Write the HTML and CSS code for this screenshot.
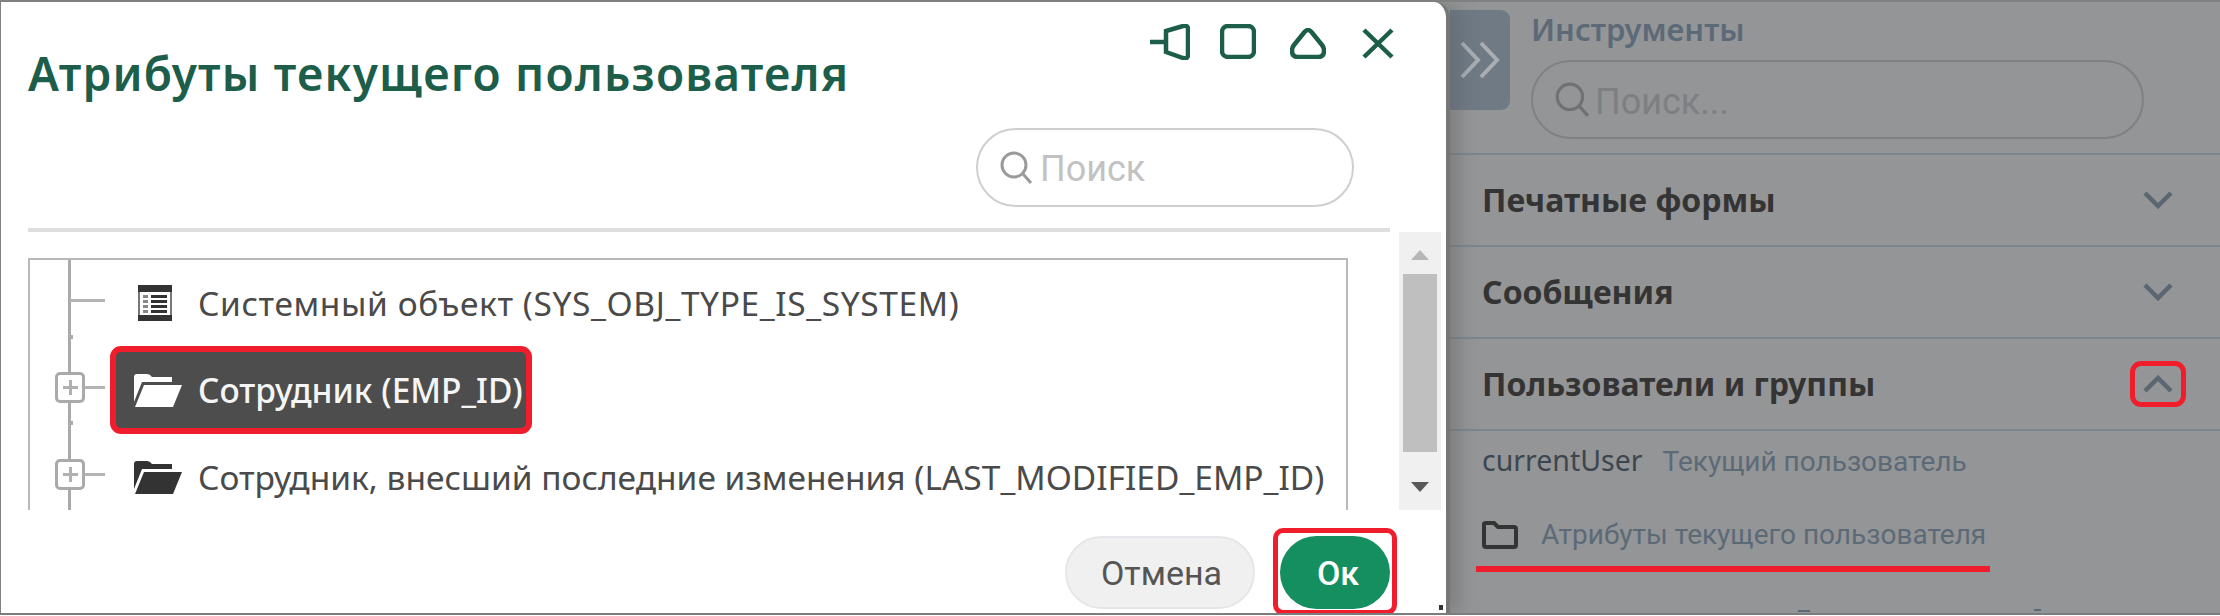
FILE: index.html
```html
<!DOCTYPE html>
<html lang="ru">
<head>
<meta charset="utf-8">
<title>Атрибуты текущего пользователя</title>
<link rel="stylesheet" href="styles.css">
</head>
<body>
<div class="stage">
  <section class="dialog">
    <header class="dialog-head">
      <h1 class="dialog-title">Атрибуты текущего пользователя</h1>
      <div class="win-icons">
        <svg class="win-a" width="40" height="36" viewBox="0 0 40 36"><path d="M0 18H16M16 7V28L33 34Q38 35 38 31V5Q38 1 33 2Z"/></svg>
        <svg class="win-b" width="36" height="35" viewBox="0 0 36 35"><rect x="2" y="2" width="32" height="31" rx="6"/></svg>
        <svg class="win-c" width="36" height="31" viewBox="0 0 36 31"><path d="M14.500 4Q18 0 21.500 4L32 17Q34 19.500 34 23Q34 29 28 29H8Q2 29 2 23Q2 19.500 4 17Z"/></svg>
        <svg class="win-d" width="32" height="31" viewBox="0 0 32 31"><path d="M2 2L30 29M30 2L2 29"/></svg>
      </div>
    </header>
    <div class="dialog-search">
      <div class="search-box">
        <svg class="loupe" width="34" height="34" viewBox="0 0 34 34"><circle cx="15" cy="14" r="12"/><path d="M24 23L32 32"/></svg>
        <span class="search-hint">Поиск</span>
      </div>
    </div>
    <div class="divider"></div>
    <div class="tree-area">
      <div class="tree">
        <div class="tree-row">
          <span class="gutter gutter-leaf"><i class="twig"></i></span>
          <span class="node">
            <span class="node-icon">
              <svg width="34" height="36" viewBox="0 0 34 36"><path class="ic-frame" d="M1 0V36M33 0V36"/><path class="ic-dark" d="M0 0H34V7H0ZM0 30H34V36H0ZM13 10H29V13H13ZM13 15H29V18H13ZM13 20H29V23H13ZM13 25H29V28H13Z"/><path class="ic-dim" d="M5 10H10V13H5ZM5 15H10V18H5ZM5 20H10V23H5ZM5 25H10V28H5Z"/></svg>
            </span>
            <span class="node-label node-label-wide">Системный объект (SYS_OBJ_TYPE_IS_SYSTEM)</span>
          </span>
        </div>
        <div class="tree-row">
          <span class="gutter"><span class="toggle"><svg width="17" height="17" viewBox="0 0 17 17"><path d="M8.500 1V16M1 8.500H16"/></svg></span><i class="twig"></i></span>
          <span class="node node-selected">
            <span class="node-icon">
              <svg class="folder-light" width="48" height="34" viewBox="0 0 48 34"><path d="M0 4Q0 1 3 1H13Q16 1 18 4H38V9H8L0 29ZM10 12H48L39 34H1Z"/></svg>
            </span>
            <span class="node-label">Сотрудник (EMP_ID)</span>
          </span>
        </div>
        <div class="tree-row">
          <span class="gutter"><span class="toggle"><svg width="17" height="17" viewBox="0 0 17 17"><path d="M8.500 1V16M1 8.500H16"/></svg></span><i class="twig"></i></span>
          <span class="node">
            <span class="node-icon">
              <svg class="folder-dark" width="48" height="34" viewBox="0 0 48 34"><path d="M0 4Q0 1 3 1H13Q16 1 18 4H38V9H8L0 29ZM10 12H48L39 34H1Z"/></svg>
            </span>
            <span class="node-label">Сотрудник, внесший последние изменения (LAST_MODIFIED_EMP_ID)</span>
          </span>
        </div>
      </div>
      <div class="scrollbar">
        <span class="arrow-up"></span>
        <span class="thumb"></span>
        <span class="arrow-down"></span>
      </div>
    </div>
    <footer class="dialog-foot">
      <button class="btn-cancel" type="button">Отмена</button>
      <span class="mark-ok"><button class="btn-ok" type="button">Ок</button></span>
    </footer>
    <span class="grip"></span>
  </section>

  <aside class="panel">
    <div class="panel-head">
      <div class="panel-tab">
        <svg width="42" height="38" viewBox="0 0 42 38"><path d="M3 2L19 19L3 36M22 2L38 19L22 36"/></svg>
      </div>
      <div class="panel-tools">
        <div class="panel-title">Инструменты</div>
        <div class="panel-search">
          <svg class="loupe-dim" width="36" height="36" viewBox="0 0 34 34"><circle cx="15" cy="14" r="12"/><path d="M24 23L32 32"/></svg>
          <span class="panel-hint">Поиск...</span>
        </div>
      </div>
    </div>
    <div class="section">
      <span class="section-title">Печатные формы</span>
      <span class="chev-box"><svg width="30" height="18" viewBox="0 0 30 18"><path d="M2 2L15 15L28 2"/></svg></span>
    </div>
    <div class="section">
      <span class="section-title">Сообщения</span>
      <span class="chev-box"><svg width="30" height="18" viewBox="0 0 30 18"><path d="M2 2L15 15L28 2"/></svg></span>
    </div>
    <div class="section">
      <span class="section-title">Пользователи и группы</span>
      <span class="chev-box chev-marked"><svg width="30" height="18" viewBox="0 0 30 18"><path d="M2 16L15 3L28 16"/></svg></span>
    </div>
    <div class="var-row">
      <span class="var-code">currentUser</span>
      <span class="var-name">Текущий пользователь</span>
    </div>
    <div class="folder-row">
      <svg width="36" height="28" viewBox="0 0 36 28"><path d="M2 24V3Q2 2 4 2H12L16 6H32Q34 6 34 8V24Q34 26 32 26H4Q2 26 2 24Z"/></svg>
      <span class="folder-name">Атрибуты текущего пользователя</span>
    </div>
    <div class="cut-row">
      <span class="cut-bar"></span>
      <span class="cut-breve"></span>
    </div>
  </aside>
</div>
</body>
</html>
```
FILE: styles.css
```css
* { box-sizing: border-box; }
html, body { margin: 0; padding: 0; background: #fff; }
body { width: 2220px; height: 616px; overflow: hidden; font-family: "Roboto", "Liberation Sans", sans-serif; }

.stage {
  display: flex;
  width: 2220px;
  height: 615px;
  background: #949596;
  border-top: 2px solid #808080;
  border-bottom: 2px solid #7c7c7c;
  overflow: hidden;
}

/* Dialog */
.dialog {
  position: relative;
  flex: 0 0 1450px;
  display: flex;
  flex-direction: column;
  background: #fff;
  border-left: 1px solid #808080;
  border-right: 4px solid #767676;
  border-top-right-radius: 16px;
  box-shadow: 10px 0 18px rgba(90, 90, 90, .35);
  z-index: 1;
}
.dialog > * { flex: none; }
.dialog-head {
  display: flex;
  justify-content: space-between;
  align-items: flex-start;
  height: 126px;
  padding-left: 27px;
}
.dialog-title {
  margin: 45px 0 0;
  font-family: "Noto Sans", "Liberation Sans", sans-serif;
  font-size: 46px;
  line-height: 52px;
  font-weight: 600;
  letter-spacing: 1.200px;
  color: #1c5e4a;
  white-space: nowrap;
}
.win-icons {
  display: flex;
  align-items: flex-start;
  margin: 22px 52px 0 0;
}
.win-icons svg { fill: none; stroke: #1c5e4a; stroke-width: 4.500; }
.win-a { margin-right: 30px; }
.win-b { margin-right: 34px; }
.win-c { margin: 4px 36px 0 0; }
.win-d { margin-top: 4px; }

.dialog-search {
  display: flex;
  justify-content: flex-end;
  height: 79px;
  padding-right: 92px;
  margin-bottom: 21px;
}
.search-box {
  display: flex;
  align-items: center;
  width: 378px;
  height: 79px;
  padding-left: 21px;
  border: 2px solid #cfcfcf;
  border-radius: 40px;
}
.loupe { fill: none; stroke: #9a9a9a; stroke-width: 3; margin-right: 7px; }
.search-hint { font-size: 36px; color: #c2c2c2; line-height: 40px; padding-top: 2px; }

.divider { height: 4px; margin-left: 27px; width: 1362px; background: #dedede; }

.tree-area { display: flex; height: 278px; }
.tree {
  position: relative;
  width: 1320px;
  margin: 26px 0 0 27px;
  padding-top: 0;
  border: 2px solid #b8b8b8;
  border-bottom: 0;
  overflow: hidden;
}
.tree::before {
  content: "";
  position: absolute;
  left: 38px;
  top: 0;
  bottom: 0;
  width: 3px;
  background: #aaa;
}
.tree::after {
  content: "";
  position: absolute;
  left: 41px;
  top: 75px;
  width: 2px;
  height: 4px;
  background: #aaa;
  box-shadow: 0 86px #aaa;
}
.tree-row { display: flex; align-items: center; height: 87px; flex: none; }
.tree-row:first-child { margin-top: -3px; }
.gutter { position: relative; display: flex; align-items: center; width: 75px; padding-left: 25px; flex: none; }
.gutter-leaf { padding-left: 40px; }
.twig { flex: 1; height: 3px; background: #b4b4b4; }
.toggle {
  position: relative;
  display: flex;
  align-items: center;
  justify-content: center;
  width: 30px;
  height: 31px;
  background: #fff;
  border: 3px solid #aaa;
  border-radius: 5px;
}
.toggle svg { fill: none; stroke: #b0b0b0; stroke-width: 3; }
.node {
  display: flex;
  align-items: center;
  height: 88px;
  margin: 4px 0 0 5px;
  padding: 0 3px 0 18px;
  border: 6px solid transparent;
  border-radius: 11px;
}
.node-selected { background: #4d4d4d; border-color: #f01e2c; }
.node-icon { display: flex; justify-content: center; width: 48px; margin-right: 16px; }
.node-icon svg { margin-right: 6px; }
.node-icon .folder-light, .node-icon .folder-dark { margin-right: 0; }
.ic-frame { fill: none; stroke: #777; stroke-width: 2; }
.ic-dark { fill: #333; }
.ic-dim { fill: #888; }
.folder-light { fill: #fff; }
.folder-dark { fill: #333; }
.node-label {
  font-family: "Noto Sans", "Liberation Sans", sans-serif;
  font-size: 33.500px;
  line-height: 40px;
  color: #4a4a4a;
  white-space: nowrap;
}
.node-label-wide { letter-spacing: .6px; }
.node-selected .node-label { color: #f5f5f5; font-weight: 500; }

.scrollbar {
  display: flex;
  flex-direction: column;
  align-items: center;
  width: 42px;
  margin-left: 51px;
  padding: 18px 4px 0;
  background: #f0f0f0;
}
.arrow-up { border: 9px solid transparent; border-top: 0; border-bottom: 10px solid #b6b6b6; width: 0; }
.thumb { width: 34px; height: 178px; margin: 14px 0 30px; background: #bfbfbf; flex: none; }
.arrow-down { border: 9px solid transparent; border-bottom: 0; border-top: 10px solid #595959; width: 0; }

.dialog-foot {
  display: flex;
  align-items: flex-start;
  justify-content: flex-end;
  padding: 18px 49px 0 0;
}
.btn-cancel {
  width: 190px;
  height: 73px;
  margin: 8px 18px 0 0;
  padding-left: 9px;
  background: #f0f0f0;
  border: 2px solid #e6e6ea;
  border-radius: 37px;
  font: 400 34px/40px "Roboto", "Liberation Sans", sans-serif;
  color: #555;
}
.mark-ok {
  display: block;
  width: 124px;
  height: 87px;
  padding: 3px 2px;
  border: 5px solid #f01e2c;
  border-radius: 10px;
}
.btn-ok {
  width: 110px;
  height: 73px;
  padding-left: 12px;
  background: #168f60;
  border: 0;
  border-radius: 37px;
  font: 500 34px/40px "Roboto", "Liberation Sans", sans-serif;
  color: #fff;
}
.grip { position: absolute; right: 3px; bottom: 3px; width: 4px; height: 5px; background: #333; }

/* Right panel */
.panel { flex: 1; display: flex; flex-direction: column; background: #949596; }
.panel > * { flex: none; }
.panel-head { display: flex; height: 153px; border-bottom: 2px solid #7e868d; }
.panel-tab {
  display: flex;
  align-items: center;
  justify-content: center;
  width: 60px;
  height: 100px;
  margin-top: 8px;
  background: #6f7a85;
  border-radius: 0 9px 9px 0;
}
.panel-tab svg { fill: none; stroke: #a9aeb4; stroke-width: 4; }
.panel-tools { margin-left: 21px; }
.panel-title {
  margin-top: 8px;
  font-family: "Noto Sans", "Liberation Sans", sans-serif;
  font-size: 31px;
  line-height: 38px;
  font-weight: 600;
  color: #5c6a78;
}
.panel-search {
  display: flex;
  align-items: center;
  width: 613px;
  height: 79px;
  margin-top: 12px;
  padding-left: 21px;
  border: 2px solid #7f8183;
  border-radius: 40px;
}
.loupe-dim { fill: none; stroke: #6f7174; stroke-width: 3; margin-right: 5px; }
.panel-hint { font-size: 36px; color: #7d7f82; padding-top: 4px; }

.section {
  display: flex;
  align-items: center;
  justify-content: space-between;
  height: 92px;
  padding: 0 34px 0 32px;
  border-bottom: 2px solid #7e868d;
}
.section-title {
  margin-top: -1px;
  font-family: "Noto Sans", "Liberation Sans", sans-serif;
  font-size: 32px;
  font-weight: 700;
  color: #343434;
}
.chev-box {
  display: flex;
  align-items: center;
  justify-content: center;
  width: 56px;
  height: 46px;
  border: 5px solid transparent;
  border-radius: 11px;
}
.chev-box svg { fill: none; stroke: #5a6672; stroke-width: 4.500; }
.chev-marked { border-color: #f01e2c; }

.var-row { display: flex; align-items: baseline; gap: 20px; padding: 10px 0 0 32px; height: 65px; }
.var-code { font-family: "Noto Sans", "Liberation Sans", sans-serif; font-size: 28.500px; color: #3c4650; }
.var-name { font-size: 28px; color: #5c6a78; }
.folder-row {
  display: flex;
  align-items: center;
  width: 514px;
  height: 76px;
  margin-left: 26px;
  padding: 7px 0 0 6px;
  border-bottom: 6px solid #f01e2c;
}
.folder-row svg { fill: none; stroke: #343434; stroke-width: 4; margin-right: 23px; }
.folder-name { font-size: 28px; color: #5c6a78; white-space: nowrap; }
.cut-row { display: flex; padding: 35px 0 0 348px; }
.cut-bar { width: 12px; height: 2px; margin-top: 3px; background: #5c6a78; }
.cut-breve { width: 7px; height: 4px; margin-left: 224px; border-bottom: 2px solid #5c6a78; }
```
